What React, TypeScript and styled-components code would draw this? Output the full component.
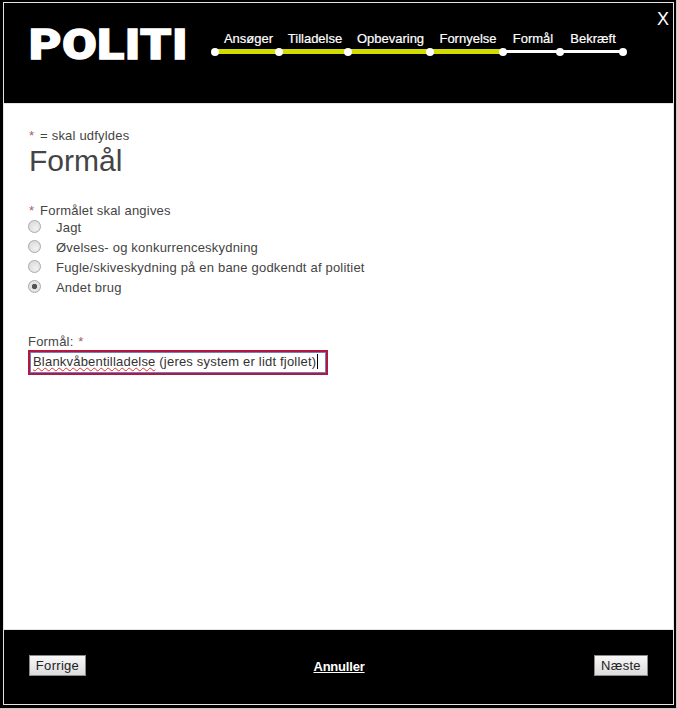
import React from 'react';
import styled, { createGlobalStyle } from 'styled-components';

const Yellow = '#d2dc00';
const TextGray = '#444444';

const GlobalStyle = createGlobalStyle`
  html, body {
    margin: 0;
    padding: 0;
    background: #000;
  }
  body {
    font-family: "Liberation Sans", Arial, sans-serif;
  }
`;

const Window = styled.div`
  box-sizing: border-box;
  width: 677px;
  height: 709px;
  padding: 2px 2px 3px 3px;
  background: #000;
  border-right: 1px solid #c8c8c8;
  border-bottom: 1px solid #c8c8c8;
  display: flex;
`;

const Dialog = styled.div`
  position: relative;
  flex: 1;
  display: flex;
  flex-direction: column;
  border: 1px solid #e4e4e4;
  background: #fff;
`;

const Header = styled.header`
  box-sizing: border-box;
  height: 101px;
  background: #000;
  border-bottom: 1px solid #e4e4e4;
  padding: 25px 0 0 25px;
  display: flex;
  align-items: flex-start;
`;

const Logo = styled.div`
  width: 157px;
  height: 33px;
  margin-right: 29px;
  color: #fff;
  font-family: Roboto, "Liberation Sans", sans-serif;
  font-size: 43px;
  font-weight: 900;
  line-height: 33px;
  letter-spacing: 0.6px;
  white-space: nowrap;
  -webkit-text-stroke: 1.4px #fff;
  transform: scaleX(1.16);
  transform-origin: left center;
`;

const Close = styled.a`
  position: absolute;
  top: 6px;
  right: 4px;
  color: #fff;
  font-size: 18px;
  line-height: 20px;
`;

const Stepper = styled.ol`
  list-style: none;
  margin: 2px 0 0;
  padding: 0;
  display: flex;
`;

const Step = styled.li<{ $width: number; $done?: boolean }>`
  position: relative;
  box-sizing: border-box;
  width: ${(p) => p.$width}px;
  height: 24px;
  padding: 1px 0 0 3px;
  color: #fff;
  font-size: 13px;
  line-height: 16px;
  text-align: center;
  white-space: nowrap;
  -webkit-text-stroke: 0.2px #fff;

  &::before {
    content: '';
    position: absolute;
    left: 0;
    right: 0;
    top: ${(p) => (p.$done ? '19px' : '20px')};
    height: ${(p) => (p.$done ? '5px' : '3px')};
    background: ${(p) => (p.$done ? Yellow : '#fff')};
  }

  &::after {
    content: '';
    position: absolute;
    left: -4px;
    top: 18px;
    width: 8px;
    height: 8px;
    border-radius: 50%;
    background: #fff;
  }
`;

const EndDot = styled.span`
  position: absolute;
  right: -4px;
  top: 18px;
  width: 8px;
  height: 8px;
  border-radius: 50%;
  background: #fff;
`;

const Content = styled.main`
  flex: 1;
  padding: 24px 25px 0 24px;
  color: ${TextGray};
  font-size: 13px;
  letter-spacing: 0.2px;
`;

const Hint = styled.div`
  line-height: 16px;
`;

const Star = styled.span`
  margin: 0 2px 0 1px;
  color: #a5606e;
`;

const Title = styled.h1`
  margin: 0 0 25px 1px;
  font-size: 30px;
  font-weight: 400;
  line-height: 34px;
  letter-spacing: 0;
`;

const RadioGroup = styled.div`
  margin-top: -2px;
  display: flex;
  flex-direction: column;
`;

const RadioRow = styled.label`
  height: 20px;
  display: flex;
  align-items: center;
`;

const RadioInput = styled.input`
  appearance: none;
  box-sizing: border-box;
  width: 13px;
  height: 13px;
  margin: -2px 15px 0 0;
  flex: none;
  border: 1px solid #a9a9a9;
  border-radius: 50%;
  background: radial-gradient(circle at 60% 65%, #f2f2f2, #d4d4d4);

  &:checked {
    background: radial-gradient(circle, #555 0, #555 2.4px, #e4e4e4 3px);
  }
`;

const FieldLabel = styled.label`
  display: block;
  margin-top: 37px;
  line-height: 16px;
`;

const TextBox = styled.div`
  box-sizing: border-box;
  width: 300px;
  height: 25px;
  padding: 1px 0 0 3px;
  border: 2px solid #b3163f;
  outline: 1px solid #6f7fbf;
  outline-offset: -3px;
  color: #333;
  font-size: 13px;
  line-height: 17px;
  white-space: nowrap;
`;

const Misspelled = styled.span`
  text-decoration: underline wavy #e03030 1px;
  text-underline-offset: 1px;
`;

const Caret = styled.span`
  display: inline-block;
  width: 1px;
  height: 15px;
  margin-left: 1px;
  vertical-align: -3px;
  background: #000;
`;

const Footer = styled.footer`
  box-sizing: border-box;
  height: 75px;
  padding: 25px 25px 0 25px;
  background: #000;
  border-top: 1px solid #e4e4e4;
  display: flex;
  justify-content: space-between;
  align-items: flex-start;
`;

const NavButton = styled.button<{ $width: number }>`
  box-sizing: border-box;
  width: ${(p) => p.$width}px;
  height: 21px;
  padding: 0;
  border: 1px solid #8a8a8a;
  background: linear-gradient(#f8f8f8, #dcdcdc);
  color: #222;
  font-family: inherit;
  font-size: 13px;
  letter-spacing: 0.3px;
`;

const CancelLink = styled.a`
  margin: 4px 2px 0 0;
  color: #fff;
  font-size: 13px;
  font-weight: 700;
  line-height: 16px;
  letter-spacing: -0.2px;
  text-decoration: underline;
`;

const steps = [
  { label: 'Ansøger', width: 64, done: true },
  { label: 'Tilladelse', width: 69, done: true },
  { label: 'Opbevaring', width: 82, done: true },
  { label: 'Fornyelse', width: 73, done: true },
  { label: 'Formål', width: 57, done: false },
  { label: 'Bekræft', width: 63, done: false },
];

const purposes = [
  'Jagt',
  'Øvelses- og konkurrenceskydning',
  'Fugle/skiveskydning på en bane godkendt af politiet',
  'Andet brug',
];

const App = () => (
  <>
    <GlobalStyle />
    <Window>
      <Dialog>
        <Header>
          <Logo>POLITI</Logo>
          <Stepper>
            {steps.map(({ label, width, done }, i) => (
              <Step key={label} $width={width} $done={done}>
                {label}
                {i === steps.length - 1 && <EndDot />}
              </Step>
            ))}
          </Stepper>
        </Header>
        <Close>X</Close>
        <Content>
          <Hint>
            <Star>*</Star> = skal udfyldes
          </Hint>
          <Title>Formål</Title>
          <Hint>
            <Star>*</Star> Formålet skal angives
          </Hint>
          <RadioGroup>
            {purposes.map((purpose) => (
              <RadioRow key={purpose}>
                <RadioInput
                  type="radio"
                  name="purpose"
                  defaultChecked={purpose === 'Andet brug'}
                />
                {purpose}
              </RadioRow>
            ))}
          </RadioGroup>
          <FieldLabel>
            Formål: <Star>*</Star>
          </FieldLabel>
          <TextBox>
            <Misspelled>Blankvåbentilladelse</Misspelled> (jeres system er lidt
            fjollet)
            <Caret />
          </TextBox>
        </Content>
        <Footer>
          <NavButton $width={57}>Forrige</NavButton>
          <CancelLink href="#">Annuller</CancelLink>
          <NavButton $width={54}>Næste</NavButton>
        </Footer>
      </Dialog>
    </Window>
  </>
);

export default App;
